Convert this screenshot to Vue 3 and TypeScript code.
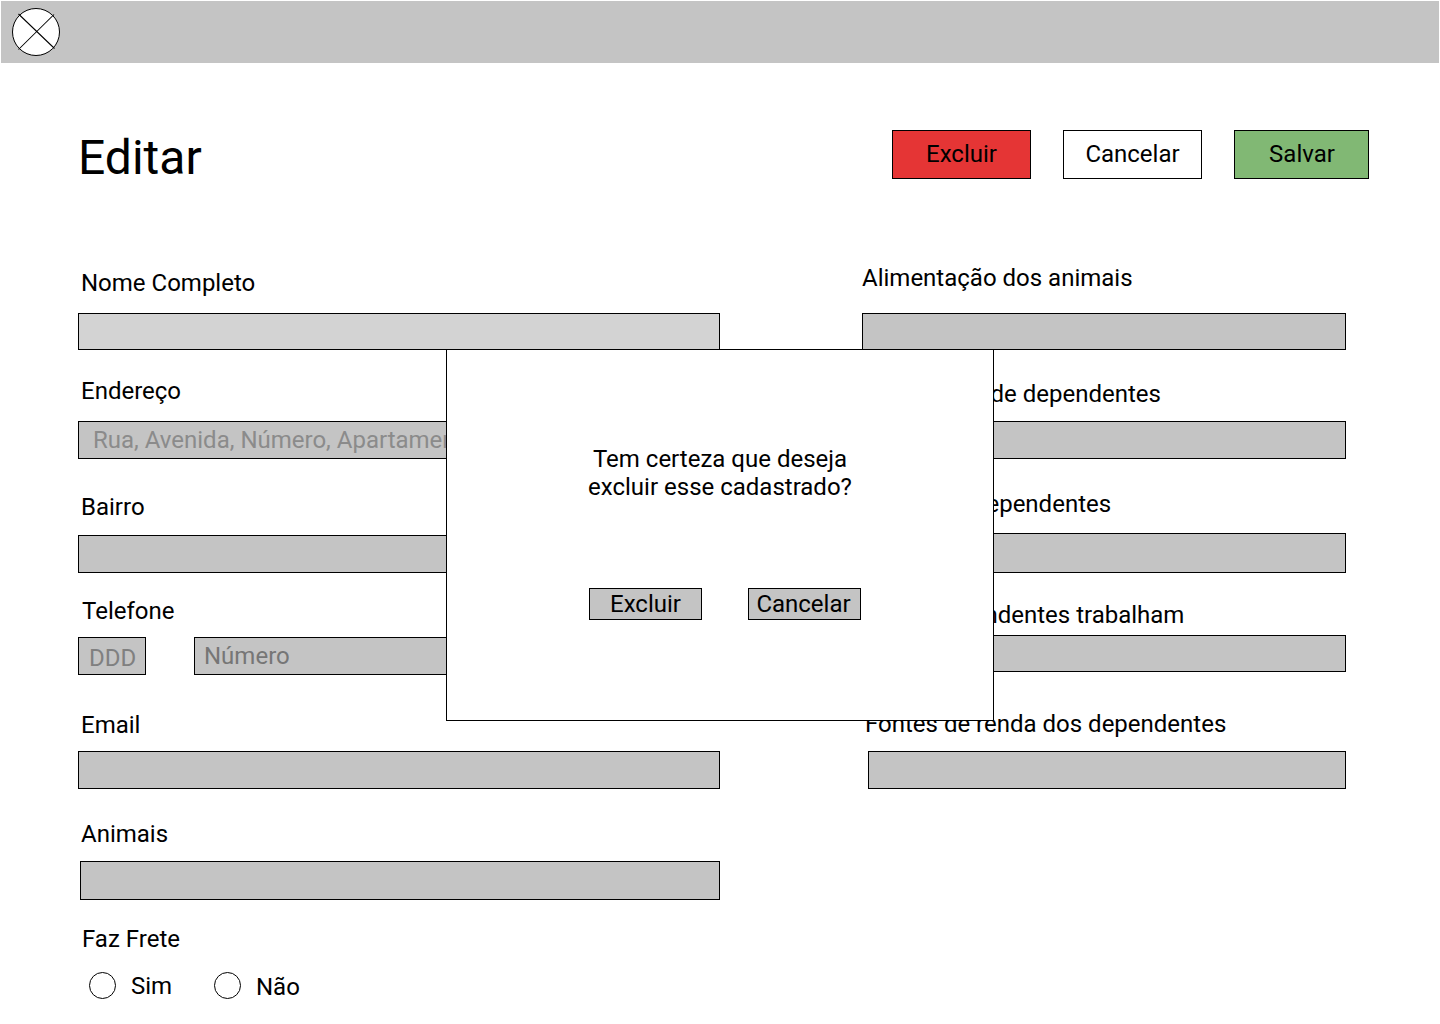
<script setup lang="ts">
interface Field {
  id: string
  label: string
  placeholder?: string
}

const personal: Field[] = [
  { id: 'nome', label: 'Nome Completo' },
  { id: 'endereco', label: 'Endereço', placeholder: 'Rua, Avenida, Número, Apartamento' },
  { id: 'bairro', label: 'Bairro' },
]

const contact: Field[] = [
  { id: 'email', label: 'Email' },
  { id: 'animais', label: 'Animais' },
]

const household: Field[] = [
  { id: 'alimentacao', label: 'Alimentação dos animais' },
  { id: 'quantidade', label: 'Quantidade de dependentes' },
  { id: 'idade', label: 'Idade dos dependentes' },
  { id: 'trabalham', label: 'Quais dependentes trabalham' },
  { id: 'fontes', label: 'Fontes de renda dos dependentes' },
]
</script>

<template>
  <div class="page">
    <header class="topbar">
      <svg class="logo" width="50" height="50" viewBox="0 0 50 50" fill="none" stroke="#000">
        <circle cx="25" cy="25" r="23.5" fill="#fff" />
        <path d="M7.5 7 43.5 41.5M43 7.5 7.5 42.5" stroke-width="1.05" />
      </svg>
    </header>

    <div class="heading">
      <h1>Editar</h1>
      <div class="actions">
        <button class="btn danger">Excluir</button>
        <button class="btn plain">Cancelar</button>
        <button class="btn success">Salvar</button>
      </div>
    </div>

    <main class="form">
      <section class="column left">
        <div v-for="f in personal" :key="f.id" class="field" :class="f.id">
          <div class="label">{{ f.label }}</div>
          <div class="box"><span v-if="f.placeholder">{{ f.placeholder }}</span></div>
        </div>
        <div class="field telefone">
          <div class="label">Telefone</div>
          <div class="phone">
            <div class="box ddd"><span>DDD</span></div>
            <div class="box numero"><span>Número</span></div>
          </div>
        </div>
        <div v-for="f in contact" :key="f.id" class="field" :class="f.id">
          <div class="label">{{ f.label }}</div>
          <div class="box"></div>
        </div>
        <div class="field frete">
          <div class="label">Faz Frete</div>
          <div class="radios">
            <i class="radio"></i><span class="sim">Sim</span>
            <i class="radio"></i><span class="nao">Não</span>
          </div>
        </div>
      </section>

      <section class="column right">
        <div v-for="f in household" :key="f.id" class="field" :class="f.id">
          <div class="label">{{ f.label }}</div>
          <div class="box"></div>
        </div>
      </section>
    </main>

    <div class="dialog" role="dialog">
      <p>Tem certeza que deseja<br />excluir esse cadastrado?</p>
      <div class="dialog-actions">
        <button class="btn small">Excluir</button>
        <button class="btn small cancel">Cancelar</button>
      </div>
    </div>
  </div>
</template>

<style>
body {
  margin: 0;
  background: #fff;
}
</style>

<style scoped>
.page {
  position: relative;
  box-sizing: border-box;
  width: 1440px;
  height: 1024px;
  padding: 1px;
  overflow: hidden;
  background: #fff;
  color: #000;
  font: 400 24px/28px Roboto, sans-serif;
}
.page * {
  box-sizing: border-box;
}
.topbar {
  display: flex;
  height: 62px;
  padding: 6px 10px;
  background: #c4c4c4;
}
.logo {
  display: block;
}
.heading {
  display: flex;
  justify-content: space-between;
  height: 116px;
  margin-top: 66px;
  padding: 0 70px 0 77px;
}
h1 {
  margin: 1px 0 0;
  font-size: 48px;
  font-weight: 400;
  line-height: 56px;
}
.actions {
  display: flex;
  gap: 32px;
  padding-top: 1px;
}
.btn {
  display: flex;
  justify-content: center;
  width: 139px;
  height: 49px;
  padding: 9px 0 0;
  border: 1px solid #000;
  border-radius: 0;
  background: #fff;
  color: #000;
  font: inherit;
}
.danger {
  background: #e53535;
}
.success {
  width: 135px;
  padding-left: 1px;
  background: #81b874;
}
.form {
  display: flex;
  gap: 142px;
  padding: 19px 0 0 77px;
}
.column {
  display: flex;
  flex-direction: column;
}
.left {
  width: 642px;
  padding-top: 5px;
}
.right {
  width: 484px;
}
.label {
  height: 28px;
  padding-left: 3px;
  white-space: nowrap;
}
.box {
  height: 38px;
  border: 1px solid #000;
  background: #c4c4c4;
  color: #8b8b8b;
  white-space: nowrap;
  overflow: hidden;
}
.box span {
  display: block;
}

.nome .label { margin-bottom: 16px; }
.nome .box { height: 37px; background: #d3d3d3; }
.endereco { margin-top: 27px; }
.endereco .label { margin-bottom: 16px; }
.endereco .box { padding: 4px 0 0 14px; }
.bairro { margin-top: 34px; }
.bairro .label { margin-bottom: 14px; }
.telefone { margin-top: 24px; }
.telefone .label { margin-bottom: 12px; padding-left: 4px; }
.phone { display: flex; gap: 48px; }
.ddd { width: 68px; padding: 6px 0 0 10px; color: #808080; }
.numero { flex: 1; padding: 4px 0 0 9px; color: #767676; }
.email { margin-top: 36px; }
.email .label { margin-bottom: 12px; }
.animais { margin-top: 31px; }
.animais .label { margin-bottom: 13px; }
.animais .box { height: 39px; margin-left: 2px; }
.frete { margin-top: 25px; }
.frete .label { margin-bottom: 19px; padding-left: 4px; }

.radios {
  display: flex;
  padding-left: 11px;
}
.radio {
  width: 27px;
  height: 27px;
  border: 1px solid #000;
  border-radius: 50%;
}
.sim { width: 83px; margin-left: 15px; }
.nao { margin: 1px 0 0 15px; }

.alimentacao .label { margin-bottom: 21px; padding-left: 0; }
.alimentacao .box { height: 37px; }
.quantidade { margin-top: 30px; }
.quantidade .label { margin-bottom: 13px; padding-left: 0; }
.idade { margin-top: 31px; }
.idade .label { margin-bottom: 15px; padding-left: 0; }
.idade .box { height: 40px; }
.trabalham { margin-top: 28px; }
.trabalham .label { width: 322px; margin-bottom: 6px; text-align: right; }
.trabalham .box { height: 37px; }
.fontes { margin-top: 38px; }
.fontes .label { margin-bottom: 13px; }
.fontes .box { margin-left: 6px; }

.dialog {
  position: absolute;
  left: 446px;
  top: 349px;
  width: 548px;
  height: 372px;
  padding-top: 95px;
  border: 1px solid #000;
  background: #fff;
  text-align: center;
}
.dialog p {
  margin: 0;
}
.dialog-actions {
  display: flex;
  gap: 46px;
  margin-top: 87px;
  padding-left: 142px;
}
.small {
  width: 113px;
  height: 32px;
  padding-top: 1px;
  background: #c4c4c4;
}
.cancel {
  padding-right: 2px;
}
</style>
